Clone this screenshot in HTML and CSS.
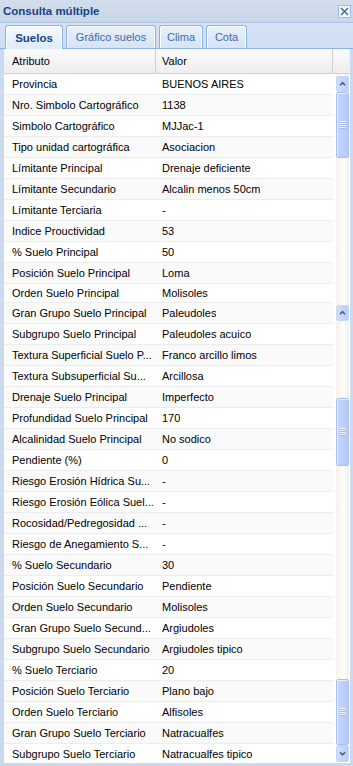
FILE: index.html
```html
<!DOCTYPE html>
<html lang="es">

<head>
    <meta charset="UTF-8">
    <title>Consulta múltiple</title>
    <link rel="stylesheet" href="styles.css">
</head>

<body>
    <div class="window">
        <div class="titlebar">
            <span class="title">Consulta múltiple</span>
            <a href="javascript:;" class="close">
                <svg width="11" height="11" viewBox="0 0 11 11">
                    <path d="M2 2 L9 9 M9 2 L2 9" stroke="#3f5f8f" stroke-width="1.4" fill="none" />
                </svg>
            </a>
        </div>
        <div class="tabstrip">
            <span class="tab on" style="width: 58px;">Suelos</span>
            <span class="tab" style="width: 90px;">Gráfico suelos</span>
            <span class="tab" style="width: 44px;">Clima</span>
            <span class="tab" style="width: 41px;">Cota</span>
        </div>
        <div class="panel">
            <div class="grid-head">
                <div class="hcell attr">Atributo</div>
                <div class="hcell val">Valor</div>
                <div class="hcell pad"></div>
            </div>
            <div class="grid-body">
                <div class="rows">
                    <div class="row"><span class="attr">Provincia</span><span class="val">BUENOS AIRES</span></div>
                    <div class="row"><span class="attr">Nro. Simbolo Cartográfico</span><span class="val">1138</span></div>
                    <div class="row"><span class="attr">Simbolo Cartográfico</span><span class="val">MJJac-1</span></div>
                    <div class="row"><span class="attr">Tipo unidad cartográfica</span><span class="val">Asociacion</span></div>
                    <div class="row"><span class="attr">Límitante Principal</span><span class="val">Drenaje deficiente</span></div>
                    <div class="row"><span class="attr">Límitante Secundario</span><span class="val">Alcalin menos 50cm</span></div>
                    <div class="row"><span class="attr">Límitante Terciaria</span><span class="val">-</span></div>
                    <div class="row"><span class="attr">Indice Prouctividad</span><span class="val">53</span></div>
                    <div class="row"><span class="attr">% Suelo Principal</span><span class="val">50</span></div>
                    <div class="row"><span class="attr">Posición Suelo Principal</span><span class="val">Loma</span></div>
                    <div class="row cut"><span class="attr">Orden Suelo Principal</span><span class="val">Molisoles</span></div>
                    <div class="row"><span class="attr">Gran Grupo Suelo Principal</span><span class="val">Paleudoles</span></div>
                    <div class="row"><span class="attr">Subgrupo Suelo Principal</span><span class="val">Paleudoles acuico</span></div>
                    <div class="row"><span class="attr">Textura Superficial Suelo P...</span><span class="val">Franco arcillo limos</span></div>
                    <div class="row"><span class="attr">Textura Subsuperficial Su...</span><span class="val">Arcillosa</span></div>
                    <div class="row"><span class="attr">Drenaje Suelo Principal</span><span class="val">Imperfecto</span></div>
                    <div class="row"><span class="attr">Profundidad Suelo Principal</span><span class="val">170</span></div>
                    <div class="row"><span class="attr">Alcalinidad Suelo Principal</span><span class="val">No sodico</span></div>
                    <div class="row"><span class="attr">Pendiente (%)</span><span class="val">0</span></div>
                    <div class="row"><span class="attr">Riesgo Erosión Hídrica Su...</span><span class="val">-</span></div>
                    <div class="row"><span class="attr">Riesgo Erosión Eólica Suel...</span><span class="val">-</span></div>
                    <div class="row"><span class="attr">Rocosidad/Pedregosidad ...</span><span class="val">-</span></div>
                    <div class="row"><span class="attr">Riesgo de Anegamiento S...</span><span class="val">-</span></div>
                    <div class="row"><span class="attr">% Suelo Secundario</span><span class="val">30</span></div>
                    <div class="row"><span class="attr">Posición Suelo Secundario</span><span class="val">Pendiente</span></div>
                    <div class="row"><span class="attr">Orden Suelo Secundario</span><span class="val">Molisoles</span></div>
                    <div class="row"><span class="attr">Gran Grupo Suelo Secund...</span><span class="val">Argiudoles</span></div>
                    <div class="row"><span class="attr">Subgrupo Suelo Secundario</span><span class="val">Argiudoles tipico</span></div>
                    <div class="row"><span class="attr">% Suelo Terciario</span><span class="val">20</span></div>
                    <div class="row"><span class="attr">Posición Suelo Terciario</span><span class="val">Plano bajo</span></div>
                    <div class="row"><span class="attr">Orden Suelo Terciario</span><span class="val">Alfisoles</span></div>
                    <div class="row"><span class="attr">Gran Grupo Suelo Terciario</span><span class="val">Natracualfes</span></div>
                    <div class="row"><span class="attr">Subgrupo Suelo Terciario</span><span class="val">Natracualfes tipico</span></div>
                </div>
                <div class="scroll">
                    <div class="track" style="height: 2px;"></div>
                    <div class="sbtn">
                        <svg width="13" height="16" viewBox="0 0 13 16"><polyline points="3.5,9.5 6.5,6.5 9.5,9.5" stroke="#4d6185" stroke-width="2" fill="none" /></svg>
                    </div>
                    <div class="thumb" style="height: 66px;"><span class="grip"></span></div>
                    <div class="track" style="height: 147px;"></div>
                    <div class="sbtn">
                        <svg width="13" height="16" viewBox="0 0 13 16"><polyline points="3.5,9.5 6.5,6.5 9.5,9.5" stroke="#4d6185" stroke-width="2" fill="none" /></svg>
                    </div>
                    <div class="track" style="height: 77px;"></div>
                    <div class="thumb" style="height: 68px;"><span class="grip"></span></div>
                    <div class="track" style="height: 213px;"></div>
                    <div class="thumb" style="height: 66px;"><span class="grip"></span></div>
                    <div class="sbtn down">
                        <svg width="13" height="17" viewBox="0 0 13 17"><polyline points="3.5,7 6.5,10 9.5,7" stroke="#4d6185" stroke-width="2" fill="none" /></svg>
                    </div>
                </div>
            </div>
        </div>
    </div>
</body>

</html>
```

FILE: styles.css
```css
* {
    margin: 0;
    padding: 0;
    text-decoration: none;
    box-sizing: border-box;
}

body {
    width: 353px;
    height: 766px;
    overflow: hidden;
    font-family: "Liberation Sans", Arial, sans-serif;
    font-size: 11px;
    color: #000;
}

.window {
    height: 766px;
    display: flex;
    flex-direction: column;
    background-color: #cbdaee;
}

.titlebar {
    height: 22px;
    display: flex;
    align-items: center;
    justify-content: space-between;
    padding: 0 2px 0 3px;
    background: linear-gradient(#d3deec, #c9d6e7);
}

.title {
    font-weight: bold;
    font-size: 11.5px;
    color: #15428b;
}

.close {
    width: 13px;
    height: 13px;
    display: flex;
    align-items: center;
    justify-content: center;
    border: 1px solid #99bbe8;
    background-color: #f4f8fd;
}

.tabstrip {
    height: 27px;
    display: flex;
    align-items: flex-end;
    gap: 3px;
    padding-left: 5px;
    background: linear-gradient(#d5e3f5, #cfdef3);
    border-top: 1px solid #a9c3e6;
    border-bottom: 1px solid #8db2e3;
}

.tab {
    height: 23px;
    display: flex;
    align-items: center;
    justify-content: center;
    border: 1px solid #8db2e3;
    border-bottom: none;
    border-radius: 3px 3px 0 0;
    box-shadow: inset 1px 1px 0 #fff, inset -1px 0 0 #fff;
    background: linear-gradient(#e8f0fb, #d6e4f6);
    color: #416aa3;
    font-size: 11px;
}

.tab.on {
    height: 24px;
    margin-bottom: -1px;
    background: linear-gradient(#f5f9fe, #deebfc);
    color: #15428b;
    font-weight: bold;
    font-size: 11.5px;
}

.panel {
    flex: 1;
    display: flex;
    flex-direction: column;
    margin: 0 3px 3px 4px;
    background-color: #fff;
    overflow: hidden;
}

.grid-head {
    height: 25px;
    display: flex;
    background: linear-gradient(#fafafa, #eeeeee);
    border-bottom: 1px solid #d0d0d0;
}

.hcell {
    display: flex;
    align-items: center;
    border-right: 1px solid #d0d0d0;
}

.hcell.attr {
    width: 152px;
    padding-left: 8px;
}

.hcell.val {
    width: 177px;
    padding-left: 6px;
}

.hcell.pad {
    flex: 1;
    border-right: none;
}

.grid-body {
    flex: 1;
    display: flex;
    overflow: hidden;
}

.rows {
    width: 329px;
    overflow: hidden;
}

.row {
    height: 21px;
    display: flex;
    align-items: center;
    border-bottom: 1px solid #ededed;
    white-space: nowrap;
}

.row:nth-child(even) {
    background-color: #fafafa;
}

.row.cut {
    height: 19px;
}

.row .attr {
    width: 152px;
    padding-left: 8px;
    overflow: hidden;
}

.row .val {
    padding-left: 6px;
    overflow: hidden;
}

.scroll {
    width: 17px;
    padding-left: 3px;
    padding-right: 1px;
    display: flex;
    flex-direction: column;
}

.track {
    flex: none;
    background: linear-gradient(to right, #f3f1ea, #fefefb 60%, #f0eee6);
}

.sbtn {
    height: 16px;
    flex: none;
    border: 1px solid #c8d6f5;
    border-radius: 2px;
    background: linear-gradient(to right, #d2ddfb, #b9cdfb);
    display: flex;
    align-items: center;
    justify-content: center;
}

.sbtn.down {
    height: 17px;
}

.thumb {
    flex: none;
    display: flex;
    align-items: center;
    justify-content: center;
    border: 1px solid #a8bdf0;
    border-radius: 2px;
    box-shadow: inset 1px 1px 0 #e6edfd;
    background: linear-gradient(to right, #c6d5fc, #b5c9fb);
}

.grip {
    width: 7px;
    height: 8px;
    background: repeating-linear-gradient(#eef3fe 0, #eef3fe 1px, #a6bbe8 1px, #a6bbe8 2px);
}
```
